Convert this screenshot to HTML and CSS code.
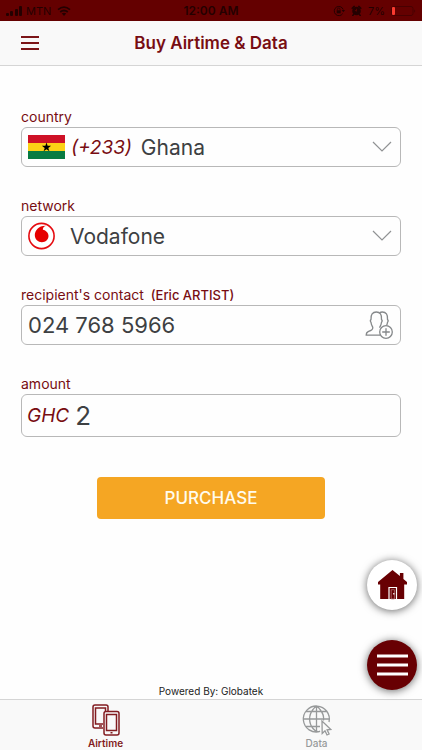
FILE: index.html
```html
<!DOCTYPE html>
<html lang="en">
<head>
<meta charset="utf-8">
<meta name="viewport" content="width=device-width, initial-scale=1">
<title>Buy Airtime &amp; Data</title>
<link rel="stylesheet" href="styles.css">
</head>
<body>
<div class="status">
  <div class="status-side">
    <svg width="17" height="10" viewBox="0 0 17 10" aria-hidden="true"><rect x="0" y="7" width="3" height="3" rx="1"/><rect x="4" y="5" width="3" height="5" rx="1"/><rect x="9" y="3" width="3" height="7" rx="1"/><rect x="13" y="0" width="3" height="10" rx="1"/></svg>
    <span>MTN</span>
    <svg class="wifi" width="14" height="10" viewBox="0 0 14 10" aria-hidden="true"><path d="M1 3.6Q7-1.4 13 3.6M3.2 6Q7 3 10.8 6" fill="none" stroke="currentColor" stroke-width="1.8"/><path d="M4.8 7.6Q7 6 9.2 7.6L7 10Z"/></svg>
  </div>
  <span class="clock">12:00 AM</span>
  <div class="status-side status-right">
    <svg width="12" height="12" viewBox="0 0 12 12" aria-hidden="true"><path d="M9.7 8.6A4.6 4.6 0 1 1 10.2 4.5" fill="none" stroke="currentColor"/><path d="M8.6 5h3.4l-1.6 2.3Z"/><rect x="3.7" y="5.3" width="4" height="3"/><path d="M4.4 5.5V4.3a1.3 1.3 0 0 1 2.6 0v1.2" fill="none" stroke="currentColor" stroke-width=".8"/></svg>
    <svg width="11" height="11" viewBox="0 0 11 11" aria-hidden="true"><circle cx="5.5" cy="6" r="4.3"/><path d="M1.2 3.2 3.2 1.4M7.8 1.4l2 1.8M2.6 9.4 1.8 10.5M8.4 9.4l.8 1.1" stroke="currentColor" stroke-width="1.5" stroke-linecap="round"/><path d="M5.5 3.8V6.2L3.8 5.2" fill="none" stroke="#640000" stroke-width=".8"/></svg>
    <span>7%</span>
    <svg width="25" height="10" viewBox="0 0 25 10" aria-hidden="true"><rect x=".5" y=".5" width="21.5" height="9" rx="2" fill="none" stroke="#480000"/><path d="M23.2 3.2q2 1.8 0 3.6Z" fill="#480000"/><rect x="1" y="1" width="3" height="8" rx="1" fill="#fb3b30"/></svg>
  </div>
</div>
<header class="navbar">
  <button class="menu" type="button" aria-label="Menu"><svg width="20" height="16" viewBox="0 0 20 16"><path d="M1 2h18M1 8h18M1 14h18" stroke="#7c1518" stroke-width="1.8"/></svg></button>
  <h1>Buy Airtime &amp; Data</h1>
</header>
<main>
  <form class="form">
    <div class="field">
      <label for="country">country</label>
      <div class="box">
        <svg width="37" height="24" viewBox="0 0 37 24" aria-hidden="true"><path fill="#ce1126" d="M0 0h37v8H0z"/><path fill="#fcd116" d="M0 8h37v8H0z"/><path fill="#087b42" d="M0 16h37v8H0z"/><path d="m18.5 7.500 1.100 3.300h3.500l-2.800 2.100 1.100 3.400-2.900-2.100-2.900 2.100 1.100-3.400-2.800-2.100h3.500Z"/></svg>
        <span class="prefix">(+233)</span>
        <select id="country"><option>Ghana</option></select>
        <svg class="chevron" width="20" height="12" viewBox="0 0 20 12" aria-hidden="true"><path d="m1 1 9 9 9-9"/></svg>
      </div>
    </div>
    <div class="field">
      <label for="network">network</label>
      <div class="box">
        <svg width="28" height="28" viewBox="0 0 28 28" aria-hidden="true"><circle cx="13.5" cy="14" r="12.600" fill="#fff" stroke="#e50b10" stroke-width="1.6"/><path fill="#e60000" d="M18.8 3.7C15.6 4 14.8 6.2 14.9 7.8c3.1.8 5.6 3.1 5.6 6.2 0 3.7-3 6.2-6.6 6.2-3.8 0-7.1-2.8-7.1-7.2 0-4.9 4.4-10 12-9.3Z"/></svg>
        <select class="network" id="network"><option>Vodafone</option></select>
        <svg class="chevron" width="20" height="12" viewBox="0 0 20 12" aria-hidden="true"><path d="m1 1 9 9 9-9"/></svg>
      </div>
    </div>
    <div class="field">
      <label for="contact">recipient's contact <strong>(Eric ARTIST)</strong></label>
      <div class="box">
        <input id="contact" type="tel" value="024 768 5966">
        <button type="button" aria-label="Choose contact"><svg width="29" height="28" viewBox="0 0 29 28" fill="none" stroke="#85888a" stroke-width="1.300"><path d="M15 24.2H1.2c0-2.2.6-3.3 2.4-3.9 3-.9 4.2-1.6 4.2-3.6 0-1.3-1.5-2.2-1.7-5-.7-1-.8-2.6-.1-3.2C5.600 3.800 7.600 1 11.300 1s5.700 2.800 5.200 7.500c.7.600.6 2.200-.1 3.200-.2 2.800-1.700 3.700-1.700 5"/><path d="M14.600 1.700Q15.600 1 17.300 1c3.700 0 5.700 2.800 5.200 7.500.7.600.6 2.200-.1 3.200-.1 1.200-.4 2-.8 2.700"/><circle cx="21" cy="21" r="6.300"/><path d="M21 17.200v7.600M17.200 21h7.600"/></svg></button>
      </div>
    </div>
    <div class="field">
      <label for="amount">amount</label>
      <div class="box tall">
        <span class="prefix currency">GHC</span>
        <input class="amount" id="amount" type="text" inputmode="decimal" value="2">
      </div>
    </div>
    <button class="purchase" type="button">PURCHASE</button>
  </form>
</main>
<footer class="powered">Powered By: Globatek</footer>
<nav class="tabs">
  <a class="tab active" href="#airtime">
    <svg width="28" height="32" viewBox="0 0 28 32" fill="none" stroke="currentColor" stroke-width="1.500" aria-hidden="true"><path d="M11 24H3a2 2 0 0 1-2-2V3a2 2 0 0 1 2-2h11a2 2 0 0 1 2 2v4"/><path d="M11 20H3.500V4h10v3M7 22h3"/><rect x="12" y="7.500" width="15" height="23.500" rx="2"/><path d="M14.500 10.500h10v16h-10zM18.500 28.800h2"/></svg>
    <span>Airtime</span>
  </a>
  <a class="tab" href="#data">
    <svg width="30" height="32" viewBox="0 0 30 32" fill="none" stroke="currentColor" stroke-width="1.300" aria-hidden="true"><path d="M18 27.500A13 13 0 1 1 27 18M14.500 2v26M1.500 15H27M4 7.500h21M4 22.500h14M18 27Q14.500 29 11 24.500C6.500 19 6.500 11 11 5.500Q14.500 0 18 5.500c3 3.500 4 7.500 3.500 11"/><path fill="#f9f9f9" d="m20 17 .2 12.500 2.800-2.700 2 4.200 2.100-1-2-4.200 3.800-.3Z"/></svg>
    <span>Data</span>
  </a>
</nav>
<div class="fabs">
  <button class="fab home" type="button" aria-label="Home"><svg width="29" height="30" viewBox="0 0 29 30"><path fill="#680003" d="M14.500 0 0 12v2.500h2.200V29h24V14.500H29V12l-3.600-3V3h-3.500v3.100Z"/><path d="M11 29V17.500h7.500V29" fill="none" stroke="#fff" stroke-width="1.200"/><path d="M13.200 19.700h3.200V29h-3.200z" fill="none" stroke="#b98082" stroke-width=".7"/><path fill="#fff" d="M15.200 23h1.200v1.500h-1.200z"/></svg></button>
  <button class="fab more" type="button" aria-label="Open menu"><svg width="32" height="24" viewBox="0 0 32 24"><path d="M1 3h31M1 12h31M1 21h31" stroke="#fff" stroke-width="3"/></svg></button>
</div>
</body>
</html>
```
FILE: styles.css
```css
* {
  box-sizing: border-box;
}

body {
  margin: 0;
  min-height: 100vh;
  display: flex;
  flex-direction: column;
  background: #fefefe;
  color: #3d4042;
  font-family: Inter, "Liberation Sans", sans-serif;
}

button,
input,
select {
  font: inherit;
  color: inherit;
  margin: 0;
  padding: 0;
  border: 0;
  background: none;
}

svg {
  display: block;
  flex: none;
}

.status {
  display: flex;
  align-items: center;
  height: 21px;
  padding: 0 6px;
  background: #640000;
  color: #240000;
  font-size: 11px;
}

.status svg {
  fill: currentColor;
}

.status-side {
  flex: 1;
  display: flex;
  align-items: center;
  gap: 3px;
}

.status-right {
  justify-content: flex-end;
  gap: 6px;
}

.wifi {
  margin-left: 3px;
}

.clock {
  font-size: 12px;
  font-weight: 600;
}

.navbar {
  display: grid;
  grid-template-columns: 40px 1fr 40px;
  align-items: center;
  height: 45px;
  padding: 0 10px;
  background: #f9f9f9;
  border-bottom: 1px solid #d5d5d5;
}

.menu {
  display: grid;
  place-items: center;
  height: 40px;
}

h1 {
  margin: 0;
  color: #780d12;
  font-size: 17px;
  font-weight: 600;
  text-align: center;
}

main {
  flex: 1;
}

.form {
  display: flex;
  flex-direction: column;
  padding: 41px 21px 20px;
}

.field {
  margin-bottom: 29px;
}

label {
  display: block;
  height: 20px;
  color: #780d12;
  font-size: 14px;
  line-height: 20px;
}

label strong {
  margin-left: 3px;
  font-size: 13px;
  font-weight: 500;
}

.box {
  display: flex;
  align-items: center;
  height: 40px;
  padding: 0 6px;
  border: 1px solid #b8b8b8;
  border-radius: 6px;
  background: #fefefe;
  font-size: 21px;
}

.tall {
  height: 43px;
  padding-left: 5px;
}

.box input,
.box select {
  flex: 1;
  min-width: 0;
  height: 100%;
  appearance: none;
}

.box input {
  font-size: 22px;
}

.prefix {
  margin: 0 9px 0 6px;
  color: #780d12;
  font-size: 19px;
  font-style: italic;
}

.currency {
  margin: 0 6px 0 0;
}

.box .network {
  margin-left: 14px;
}

.box .amount {
  font-size: 26px;
}

.chevron {
  margin-right: 2px;
  fill: none;
  stroke: #909294;
  stroke-width: 1.2;
}

.purchase {
  align-self: center;
  width: 60%;
  height: 42px;
  margin-top: 11px;
  border-radius: 4px;
  background: #f5a623;
  color: #fffbed;
  font-size: 17px;
  font-weight: 500;
}

.powered {
  height: 15px;
  color: #222;
  font-size: 10px;
  line-height: 15px;
  text-align: center;
}

.tabs {
  display: flex;
  height: 51px;
  border-top: 1px solid #d5d5d5;
  background: #f9f9f9;
}

.tab {
  flex: 1;
  display: flex;
  flex-direction: column;
  align-items: center;
  gap: 1px;
  padding-top: 4px;
  color: #97999a;
  font-size: 10px;
  font-weight: 500;
  line-height: 12px;
  text-decoration: none;
}

.active {
  color: #821c21;
  font-weight: 600;
}

.fabs {
  position: fixed;
  right: 5px;
  bottom: 60px;
  display: grid;
  gap: 30px;
}

.fab {
  display: grid;
  place-items: center;
  width: 50px;
  height: 50px;
  border-radius: 50%;
  box-shadow: 0 1px 8px rgba(0, 0, 0, 0.6);
}

.home {
  background: #fff;
}

.more {
  background: #680003;
}
```
